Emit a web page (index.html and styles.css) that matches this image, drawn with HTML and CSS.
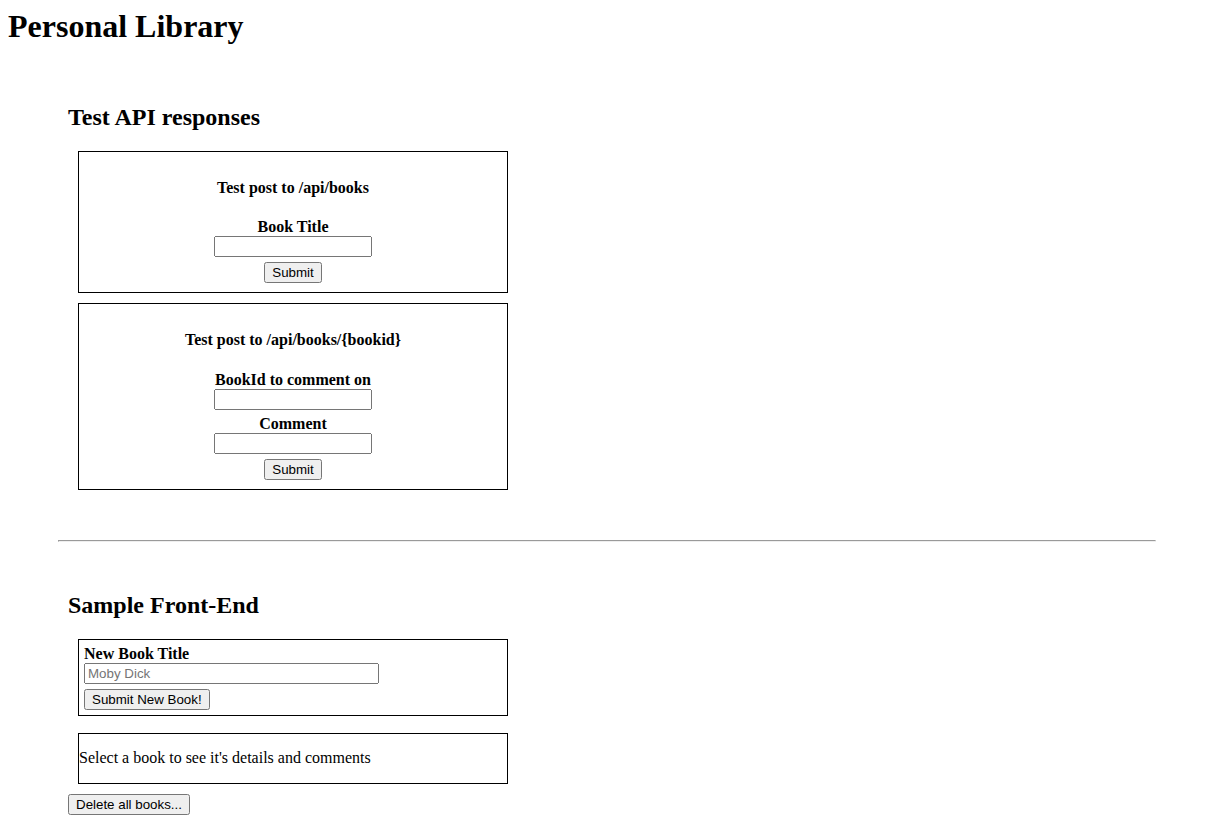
FILE: index.html
```html
<!DOCTYPE html>
<html lang="en">
<head>
<meta charset="utf-8">
<title>Personal Library</title>
<link rel="stylesheet" href="styles.css">
</head>
<body>
<header class="page-header">
  <h1 class="page-title">Personal Library</h1>
</header>

<section class="panel panel-api">
  <h2 class="panel-title">Test API responses</h2>
  <form class="box box-center" action="#" method="post">
    <h4 class="box-title">Test post to /api/books</h4>
    <label class="field-label" for="title">Book Title</label>
    <input class="field" type="text" id="title" name="title">
    <input class="btn btn-submit" type="submit" value="Submit">
  </form>
  <form class="box box-center" action="#" method="post">
    <h4 class="box-title">Test post to /api/books/{bookid}</h4>
    <label class="field-label" for="idinputtest">BookId to comment on</label>
    <input class="field" type="text" id="idinputtest" name="id">
    <label class="field-label" for="comment">Comment</label>
    <input class="field" type="text" id="comment" name="comment">
    <input class="btn btn-submit" type="submit" value="Submit">
  </form>
</section>

<hr class="divider">

<section class="panel panel-ui">
  <h2 class="panel-title">Sample Front-End</h2>
  <form class="box box-left" id="newBookForm">
    <label class="field-label" for="bookTitleToAdd">New Book Title</label>
    <input class="field field-wide" type="text" id="bookTitleToAdd" name="title" placeholder="Moby Dick">
    <button class="btn" type="submit">Submit New Book!</button>
  </form>
  <div class="box box-detail">
    <p class="detail-text">Select a book to see it's details and comments</p>
  </div>
  <button class="btn btn-delete" type="button">Delete all books...</button>
</section>
</body>
</html>
```

FILE: styles.css
```css
body {
  margin: 8px;
  font-family: "Liberation Serif", "Times New Roman", serif;
  color: #000;
  background: #fff;
}

.page-title {
  font-size: 32px;
  font-weight: bold;
  margin: 0;
}

.panel {
  margin-left: 60px;
  width: 450px;
}

.panel-api {
  margin-top: 59px;
}

.panel-title {
  font-size: 24px;
  font-weight: bold;
  margin: 0 0 19.92px;
}

.box {
  border: 1px solid #000;
  margin: 10px;
  width: 418px;
  padding: 5px;
}

.box-center {
  text-align: center;
}

.box-title {
  font-size: 16px;
  font-weight: bold;
  margin: 21.8px 0 21.28px;
}

.field-label {
  display: block;
  font-size: 16px;
  font-weight: bold;
}

.btn,
.field {
  font-family: "Liberation Sans", Arial, sans-serif;
  font-size: 13.333px;
}

.field {
  display: block;
  box-sizing: border-box;
  width: 158px;
  height: 21px;
  margin: 0 auto 5px;
}

.field-wide {
  width: 295px;
  margin: 0 0 5px;
}

.btn-submit {
  display: block;
  margin: 0 auto 4.5px;
}

.divider {
  margin: 50px;
}

#newBookForm {
  margin-bottom: 17.5px;
}

.box-detail {
  width: 428px;
  padding: 0;
}

.detail-text {
  margin: 14.3px 0 16.3px;
}

.btn-delete {
  margin: 0;
}
```
